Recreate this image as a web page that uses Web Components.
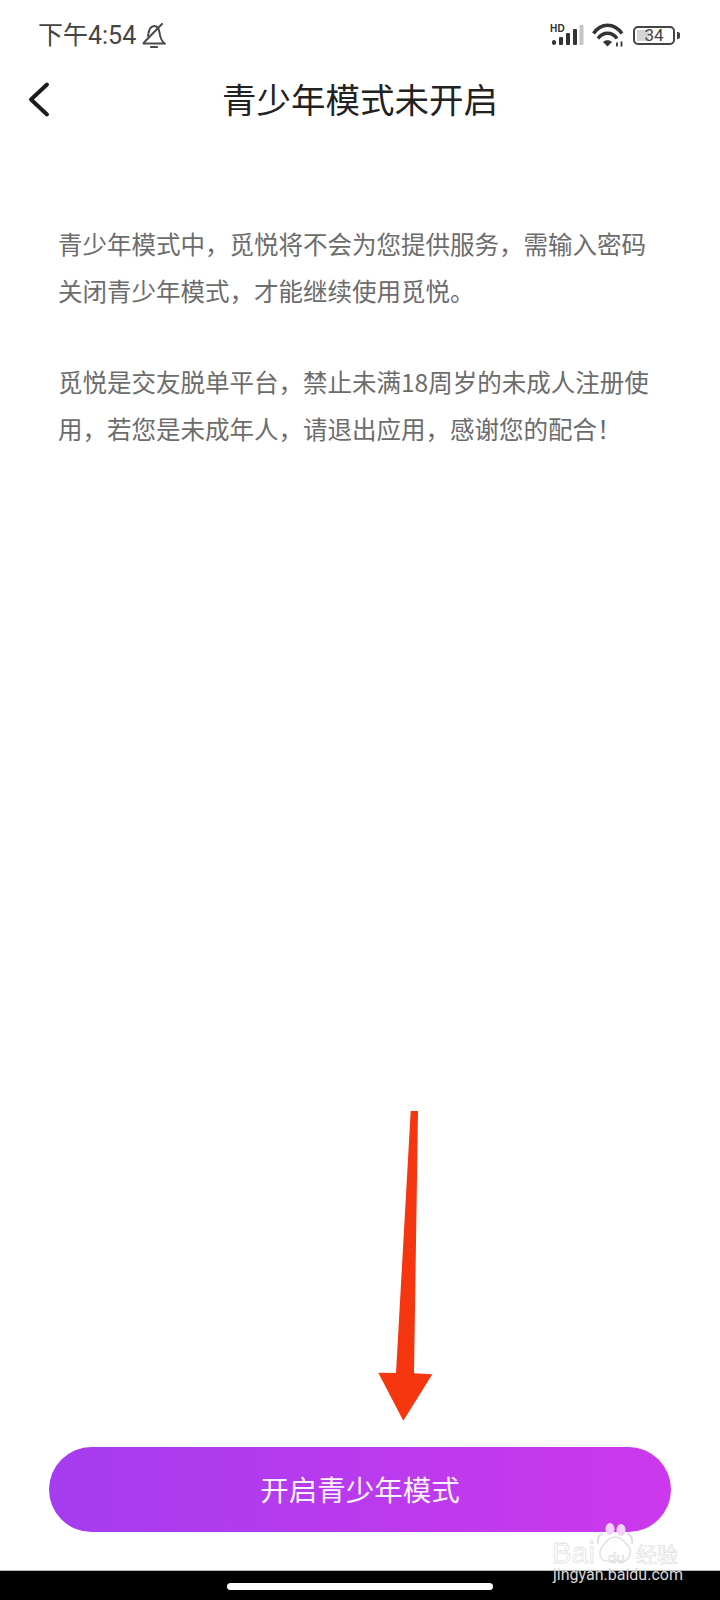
<!DOCTYPE html>
<html lang="zh-CN"><head><meta charset="utf-8"><title>青少年模式未开启</title>
<style>html,body{margin:0;padding:0;background:#fff}body{font-family:"Noto Sans CJK SC","Noto Sans",sans-serif}</style>
</head><body>
<teen-app></teen-app>
<script>
const def=(name,html)=>customElements.define(name,class extends HTMLElement{constructor(){super();this.attachShadow({mode:'open'}).innerHTML=html}});
def('status-bar',`<style>
:host{display:flex;height:70px;box-sizing:border-box;padding:0 41px 0 38px;align-items:center;justify-content:space-between;color:#444}
.l{display:flex;align-items:center;gap:6px}
.t{font:400 25px/1 "Roboto","Noto Sans CJK SC",sans-serif;color:#444}
.r{display:flex;align-items:center;gap:9px}
svg{display:block}
.sig{position:relative;width:35px;height:24px}
.hd{position:absolute;left:2px;top:0;font:700 10px/11px "Liberation Sans",sans-serif;color:#333;letter-spacing:.2px}
.bat{position:relative;width:42px;height:19px;box-sizing:border-box;border:2px solid #444;border-radius:5px;overflow:hidden;text-align:center;font:17px/15px "Roboto",sans-serif;color:#444}
.fill{position:absolute;left:2px;top:2px;bottom:2px;width:12px;background:#d4d4d4}
.n{position:relative;margin-right:4px}
.nub{position:absolute;right:-5px;top:6px;width:3px;height:7px;background:#444;border-radius:0 2px 2px 0}
</style>
<div class="l"><span class="t">下午4:54</span>
<svg width="24" height="25" viewBox="0 0 24 25" fill="none" stroke="#4a4a4a" stroke-width="2" stroke-linecap="round"><path d="M6 13C6.500 7 8 3.500 12 3C15.500 3 17 6 17.500 9.500C18 14 19 17.500 22.500 20.500H1.500"/><path d="M2 19.500L20 1"/><path d="M9 24H15" stroke-width="2.200"/></svg></div>
<div class="r">
<div class="sig"><span class="hd">HD</span>
<svg width="36" height="24" viewBox="0 0 36 24" style="position:absolute;left:0;top:0"><rect x="4" y="17" width="4" height="5" rx="2" fill="#333"/><rect x="11" y="14" width="4" height="8" rx="1" fill="#333"/><rect x="18" y="10" width="4" height="12" rx="1" fill="#333"/><rect x="25" y="6" width="4" height="16" rx="1" fill="#333"/><rect x="31.500" y="2" width="4" height="20" rx="1" fill="#c4c4c4"/></svg></div>
<svg width="32" height="24" viewBox="0 0 32 24" fill="none" stroke="#333" stroke-width="3.400"><path d="M1.500 10.500C9 -0.500 22 -0.500 30 10.500"/><path d="M6 15.500C11 8.500 20 8.500 25 15.500"/><path d="M11 19C13 16.500 18 16.500 20 19L15.500 23.500Z" fill="#333" stroke="none"/><path d="M25 19.500v4M29.500 18.500v5" stroke-width="1.800"/></svg>
<div class="n"><div class="bat"><span class="fill"></span><span style="position:relative">34</span></div><span class="nub"></span></div>
</div>`);
def('nav-bar',`<style>
:host{display:flex;height:60px;align-items:center;justify-content:center;position:relative}
h1{margin:0;font:400 34.500px/60px "Noto Sans CJK SC",sans-serif;color:#222;position:relative;top:-2px}
svg{position:absolute;left:27px;top:11px}
</style><svg width="24" height="38" viewBox="0 0 24 38" fill="none" stroke="#1c1c1c" stroke-width="4" stroke-linecap="round" stroke-linejoin="round"><path d="M20 3.500L4 18.500L20 33.500"/></svg><h1><slot></slot></h1>`);
def('info-text',`<style>
:host{display:block;padding:90px 58px 0;color:#6c6c6c;font:400 24.500px/47px "Noto Sans CJK SC",sans-serif}
::slotted(p){margin:0 0 44px}
</style><slot></slot>`);
def('cta-button',`<style>
:host{display:block;margin:0 49px;height:85px;border-radius:43px;background:linear-gradient(90deg,#a63cef,#cd38ec);color:#fdf3ff;font:400 28.500px/84px "Noto Sans CJK SC",sans-serif;text-align:center}
</style><slot></slot>`);
def('home-bar',`<style>
:host{display:flex;height:30px;background:#000;justify-content:center;box-sizing:border-box;padding-top:12px;border-top:1px solid #bbb}
i{display:block;width:266px;height:7px;border-radius:4px;background:#fff}
</style><i></i>`);
def('red-arrow',`<style>:host{position:absolute;left:370px;top:1105px;display:block}svg{display:block}</style>
<svg width="70" height="320" viewBox="370 1105 70 320"><path d="M410.700 1111H418L414 1373.300L432.300 1374.300L403.300 1420.700L378.300 1372.700L396 1373Z" fill="#f5360f"/></svg>`);
def('baidu-mark',`<style>
:host{position:absolute;left:552px;top:1520px;width:132px;height:66px;display:block;overflow:visible}
span{position:absolute;white-space:nowrap}
.o{-webkit-text-stroke:.8px #e2e2e2;color:#fff;font-family:"Liberation Sans",sans-serif}
.bai{left:0;top:22px;font-size:29px;line-height:22px;letter-spacing:.5px}
.du{left:56px;top:30px;font-size:15px;line-height:16px;-webkit-text-stroke:.6px #d8d8d8}
.jy{left:84px;top:22px;font-size:21px;line-height:22px;font-family:"Noto Sans CJK SC",sans-serif;-webkit-text-stroke:.6px #dcdcdc;color:#fff}
.url{left:1px;top:44px;font:16px/22px "Roboto",sans-serif;color:#d8d8d8}
svg{position:absolute;left:42px;top:0}
</style>
<svg width="46" height="46" viewBox="0 0 46 46" fill="none"><ellipse cx="16" cy="9" rx="4.500" ry="6" fill="#f0d4f7"/><ellipse cx="27" cy="10" rx="4.500" ry="6" fill="#f0d4f7"/><path d="M9 13C5 15 3 19 4 24M33 13C37 15 39 19 38 24" stroke="#e0e0e0" stroke-width="2"/><path d="M21 17C27 17 31 22 35 27C38 31 36 41 29 41C25 41 23 40 21 40C19 40 16 41 12 41C6 41 4 32 8 27C12 22 15 17 21 17Z" stroke="#e0e0e0" stroke-width="1.500" fill="#fff"/></svg>
<span class="o bai">Bai</span><span class="o du">du</span><span class="jy">经验</span><span class="url">jingyan.baidu.com</span>`);
def('teen-app',`<style>
:host{display:flex;flex-direction:column;height:1600px;position:relative;overflow:hidden;background:#fff}
.main{flex:1}
.foot{padding-bottom:38px}
</style>
<status-bar></status-bar>
<nav-bar>青少年模式未开启</nav-bar>
<div class="main"><info-text><p>青少年模式中\uFF0C觅悦将不会为您提供服务\uFF0C需输入密码<br>关闭青少年模式\uFF0C才能继续使用觅悦。</p><p>觅悦是交友脱单平台\uFF0C禁止未满18周岁的未成人注册使<br>用\uFF0C若您是未成年人\uFF0C请退出应用\uFF0C感谢您的配合\uFF01</p></info-text></div>
<div class="foot"><cta-button>开启青少年模式</cta-button></div>
<home-bar></home-bar>
<red-arrow></red-arrow>
<baidu-mark></baidu-mark>`);
</script>
</body></html>
